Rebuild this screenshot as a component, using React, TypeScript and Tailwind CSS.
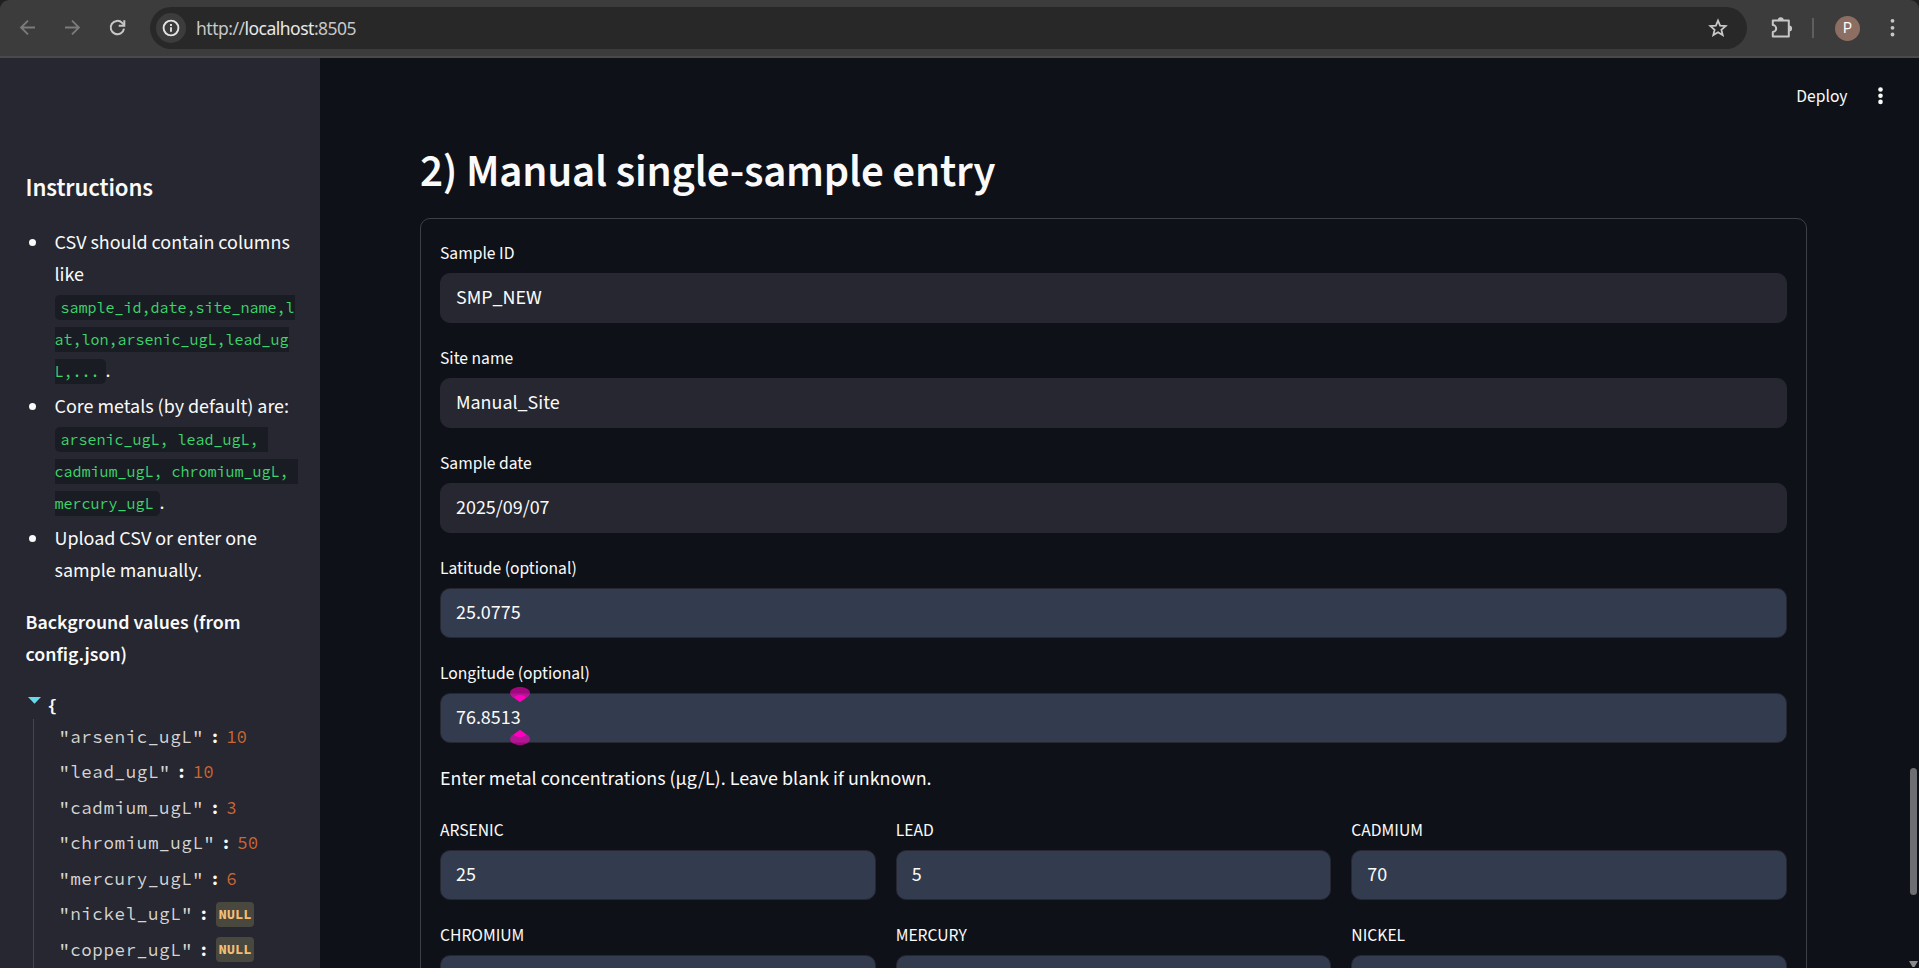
import type { ReactNode } from "react";

const sans = "font-['Source_Sans_3','Source_Sans_Pro','Noto_Sans_CJK_SC',sans-serif]";
const mono = "font-['Source_Code_Pro','Noto_Sans_Mono',monospace]";

const background: { key: string; value: number | null }[] = [
  { key: "arsenic_ugL", value: 10 },
  { key: "lead_ugL", value: 10 },
  { key: "cadmium_ugL", value: 3 },
  { key: "chromium_ugL", value: 50 },
  { key: "mercury_ugL", value: 6 },
  { key: "nickel_ugL", value: null },
  { key: "copper_ugL", value: null },
];

const metals = [
  { label: "ARSENIC", value: "25" },
  { label: "LEAD", value: "5" },
  { label: "CADMIUM", value: "70" },
  { label: "CHROMIUM", value: "" },
  { label: "MERCURY", value: "" },
  { label: "NICKEL", value: "" },
];

function BrowserBar() {
  return (
    <header className="h-[58px] shrink-0 bg-[#202020]">
      <div className="flex h-[58px] items-start rounded-t-[9px] border-b-2 border-[#4a4a4a] bg-[#3c3c3c] pt-[7px]">
        <div className="flex h-[42px] w-[150px] shrink-0 items-center pl-[15px]">
          <svg className="h-6 w-6 shrink-0" viewBox="0 0 24 24" fill="none" stroke="#7b7b7b" strokeWidth="1.9">
            <path d="M20 11.500H6.400M13 4.600L6.100 11.500l6.900 6.900" />
          </svg>
          <svg className="ml-[21px] h-6 w-6 shrink-0" viewBox="0 0 24 24" fill="none" stroke="#7b7b7b" strokeWidth="1.9">
            <path d="M5 11.500h13.600M12 4.600l6.900 6.900-6.900 6.900" />
          </svg>
          <svg className="ml-[21px] h-6 w-6 shrink-0" viewBox="0 0 24 24" fill="none" stroke="#c7c7c7" strokeWidth="2">
            <path d="M19 12.600a6.700 6.700 0 1 1-1.800-5.700l1.800 2" />
            <path d="M19.300 4.200v5.600h-5.600" />
          </svg>
        </div>
        <div className="flex h-[42px] w-[1597px] shrink-0 items-center rounded-full bg-[#282828] pr-[19px] pl-[6px]">
          <div className="flex h-[30px] w-[30px] items-center justify-center rounded-full bg-[#3c3c3c]">
            <svg className="h-[18px] w-[18px]" viewBox="0 0 18 18" fill="none" stroke="#e3e3e3" strokeWidth="1.9">
              <circle cx="9" cy="9" r="7.4" />
              <path d="M9 8.2v4.6M9 5v2" />
            </svg>
          </div>
          <div className="ml-[10px] grow font-['Noto_Sans',sans-serif] text-[17.5px] tracking-[-0.5px] text-[#c7c7c7]">
            http://<span className="text-[#e8e8e8]">localhost</span>:8505
          </div>
          <svg className="h-[20px] w-[20px]" viewBox="0 0 20 20" fill="none" stroke="#c7c7c7" strokeWidth="1.8">
            <path d="M10 2.600l2.100 5.100 5.500.4-4.200 3.600 1.300 5.400L10 14.200l-4.700 2.900 1.300-5.400-4.200-3.600 5.500-.4z" />
          </svg>
        </div>
        <div className="flex h-[42px] items-center pl-[22px]">
          <svg className="h-6 w-6" viewBox="0 0 24 24">
            <path
              d="M3.800 4.500h16v15.900h-16v-4.500a3.400 3.400 0 0 0 0-6.800z"
              fill="none"
              stroke="#c7c7c7"
              strokeWidth="2"
              strokeLinejoin="round"
            />
            <path d="M8.700 4.200a3 3 0 0 1 6 0zM20.100 9.400a2.900 2.900 0 0 1 0 6z" fill="#c7c7c7" />
          </svg>
          <div className="ml-[19px] h-5 w-[2px] bg-[#5e5e5e]" />
          <div className="ml-[21px] flex h-[25px] w-[25px] items-center justify-center rounded-full bg-[#8d6e63] font-['Roboto',sans-serif] text-[14px] text-white">
            P
          </div>
          <svg className="ml-[24px] h-6 w-[18px]" viewBox="0 0 18 24" fill="#c7c7c7">
            <circle cx="8.500" cy="4.800" r="1.9" />
            <circle cx="8.500" cy="11.800" r="1.9" />
            <circle cx="8.500" cy="18.500" r="1.9" />
          </svg>
        </div>
      </div>
    </header>
  );
}

function Code({ children }: { children: ReactNode }) {
  return (
    <code
      className={`${mono} rounded-[5px] bg-[#1a1c24] px-[6px] py-[3px] text-[15px] leading-none break-words whitespace-pre-wrap text-[#3dd56d]`}
    >
      {children}
    </code>
  );
}

function Sidebar() {
  return (
    <aside className="w-[320px] shrink-0 overflow-hidden bg-[#262730] pl-[25px]">
      <h3 className="mt-[115px] pl-[0.5px] text-[25px] leading-[30px] font-semibold tracking-[-0.005em]">Instructions</h3>
      <ul className="mt-[24px] w-[271px] list-disc pl-[23.5px] text-[20px] leading-8">
        <li className="mb-1 pl-[6px]">
          CSV should contain columns like <Code>sample_id,date,site_name,lat,lon,arsenic_ugL,lead_ugL,...</Code>.
        </li>
        <li className="mb-1 pl-[6px]">
          Core metals (by default) are: <Code>arsenic_ugL, lead_ugL, cadmium_ugL, chromium_ugL, mercury_ugL</Code>.
        </li>
        <li className="pl-[6px]">Upload CSV or enter one sample manually.</li>
      </ul>
      <p className="mt-5 pl-[0.5px] text-[20px] leading-8 font-semibold">
        Background values (from
        <br />
        config.json)
      </p>
      <div className={`mt-5 ${mono} text-[17.5px] leading-7`}>
        <div className="flex h-[28px] items-start">
          <svg className="mt-[6px] ml-[3px] h-[7px] w-[13px]" viewBox="0 0 13 7" fill="#66d9ef">
            <path d="M0 0h13L6.5 6.7z" />
          </svg>
          <span className="ml-[6px] pt-[1px] font-bold">&#123;</span>
        </div>
        <div className="ml-[8px] border-l border-[#49483e] pl-[25px]">
          {background.map(({ key, value }) => (
            <div key={key} className="flex h-[35.5px] items-center">
              <span className="tracking-[0.625px] text-[#d6d5d3]">"{key}"</span>
              <span className="ml-[6px] font-semibold">:</span>
              {value === null ? (
                <span className="ml-[7px] h-[25px] rounded-[4px] bg-[#49483e] px-[2.5px] text-[13.75px] leading-[25px] font-bold text-[#f4bf75]">
                  NULL
                </span>
              ) : (
                <span className="ml-[6px] text-[#cc6633]">{value}</span>
              )}
            </div>
          ))}
        </div>
      </div>
    </aside>
  );
}

function Field({
  label,
  value,
  autofilled = false,
  children,
}: {
  label: string;
  value: string;
  autofilled?: boolean;
  children?: ReactNode;
}) {
  return (
    <label className="block">
      <span className="mb-[5px] flex h-[30px] items-center pt-[2px] text-[17.5px]">{label}</span>
      <span
        className={`relative flex h-[50px] items-center rounded-[10px] border border-[#262730] px-[15px] text-[20px] ${
          autofilled ? "bg-[#333b4f]" : "bg-[#262730]"
        }`}
      >
        {value}
        {children}
      </span>
    </label>
  );
}

function CaretMarker({ flipped = false }: { flipped?: boolean }) {
  return (
    <svg
      className={`absolute left-[69px] h-[15px] w-[20px] ${flipped ? "top-[36px] rotate-180" : "top-[-7px]"}`}
      viewBox="0 0 20 15"
    >
      <path d="M10 15L1.7 9.6A6 6 0 0 1 0 6C0 2.5 4.5 0 10 0s10 2.500 10 6a6 6 0 0 1-1.700 3.600z" fill="#ff00bf" fillOpacity="0.62" />
      <path d="M10 15L3.800 10.500C6 7 14 7 16.200 10.500z" fill="#ff00bf" />
    </svg>
  );
}

function Main() {
  return (
    <main className="relative min-w-0 grow overflow-hidden bg-[#0e1117] pl-[100px]">
      <div className="flex h-[78px] items-center justify-end pr-[33px] text-[17.5px]">
        Deploy
        <svg className="ml-[27.5px] h-5 w-[11px]" viewBox="0 0 11 20" fill="#fafafa">
          <circle cx="5.500" cy="2.500" r="2.300" />
          <circle cx="5.500" cy="8.700" r="2.300" />
          <circle cx="5.500" cy="14.900" r="2.300" />
        </svg>
      </div>
      <h2 className="mt-[9px] mb-[19px] text-[45px] leading-[54px] font-semibold tracking-[-0.005em]">
        2) Manual single-sample entry
      </h2>
      <form className="flex w-[1387px] flex-col gap-5 rounded-[10px] border border-[#3e4045] p-[19px]">
        <Field label="Sample ID" value="SMP_NEW" />
        <Field label="Site name" value="Manual_Site" />
        <Field label="Sample date" value="2025/09/07" />
        <Field label="Latitude (optional)" value="25.0775" autofilled />
        <Field label="Longitude (optional)" value="76.8513" autofilled>
          <CaretMarker />
          <CaretMarker flipped />
        </Field>
        <p className="text-[20px] leading-8">Enter metal concentrations (µg/L). Leave blank if unknown.</p>
        <div className="grid grid-cols-3 gap-5">
          {metals.map((m) => (
            <Field key={m.label} label={m.label} value={m.value} autofilled />
          ))}
        </div>
      </form>
      <div className="absolute top-[710px] right-[2px] h-[127px] w-[7px] rounded-full bg-[#6e6f73]" />
      <svg className="absolute right-[1px] bottom-[1px] h-[6px] w-[9px]" viewBox="0 0 9 6" fill="#8b8b8b">
        <path d="M0 0h9L5.500 6h-2z" />
      </svg>
    </main>
  );
}

export default function App() {
  return (
    <div className={`flex h-[968px] w-full flex-col overflow-hidden text-[#fafafa] ${sans}`}>
      <BrowserBar />
      <div className="flex min-h-0 grow">
        <Sidebar />
        <Main />
      </div>
    </div>
  );
}
